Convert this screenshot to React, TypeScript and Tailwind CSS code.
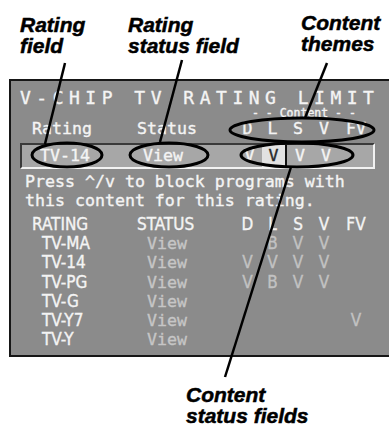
const mono = "font-['DejaVu_Sans_Mono',monospace]";
const sans = "font-['DejaVu_Sans_Condensed','Liberation_Sans_Narrow','DejaVu_Sans',sans-serif]";
const label = "font-['Liberation_Sans',Arial,sans-serif] text-[21px] leading-[21px] font-bold italic text-black [-webkit-text-stroke:0.5px_#000]";

type Row = { rating: string; cells: string[] };

const rows: Row[] = [
  { rating: "TV-MA", cells: ["", "B", "V", "V", ""] },
  { rating: "TV-14", cells: ["V", "V", "V", "V", ""] },
  { rating: "TV-PG", cells: ["V", "B", "V", "V", ""] },
  { rating: "TV-G", cells: ["", "", "", "", ""] },
  { rating: "TV-Y7", cells: ["", "", "", "", "V"] },
  { rating: "TV-Y", cells: ["", "", "", "", ""] },
];

const themes = ["D", "L", "S", "V", "FV"];
const cols = "grid grid-cols-[110px_105px_25px_25px_26px_26px_38px]";

function Callouts() {
  return (
    <svg className="pointer-events-none absolute inset-0" width={389} height={426} viewBox="0 0 389 426" fill="none" stroke="#000">
      <line x1={65} y1={63} x2={45} y2={144} strokeWidth={2.5} />
      <line x1={182} y1={60} x2={160} y2={142} strokeWidth={2.5} />
      <line x1={327} y1={63} x2={305} y2={118} strokeWidth={2.5} />
      <line x1={291} y1={167} x2={225} y2={377} strokeWidth={2.5} />
      <ellipse cx={67} cy={155} rx={35} ry={12} strokeWidth={3} />
      <ellipse cx={169} cy={155} rx={39} ry={12} strokeWidth={3} />
      <ellipse cx={302} cy={130} rx={72} ry={12} strokeWidth={3} />
      <ellipse cx={297} cy={155} rx={56} ry={12} strokeWidth={3} />
    </svg>
  );
}

export default function App() {
  return (
    <div className="relative h-[426px] w-[389px] overflow-hidden bg-white">
      {/* top callout labels */}
      <div className="flex h-[79px] pl-[20px] pt-[14px]">
        <div className={`w-[108px] ${label}`}>
          Rating
          <br />
          field
        </div>
        <div className={`w-[173px] ${label}`}>
          Rating
          <br />
          status field
        </div>
        <div className={`${label} -mt-[2px]`}>
          Content
          <br />
          themes
        </div>
      </div>

      {/* on-screen menu */}
      <div className="ml-[9px] h-[278px] border-y-2 border-l-2 border-[#161616] bg-[#8b8b8b] text-[#f4f4f4] [-webkit-text-stroke:0.35px_currentColor]">
        <div className={`pl-[9px] pt-[7px] text-[18px] leading-[20px] tracking-[5.5px] ${mono}`}>
          V-CHIP TV RATING LIMIT
        </div>

        <div className={`${cols} pl-[9px] text-[11.5px] leading-[10px] ${mono}`}>
          <div className="col-span-2" />
          <div className="col-span-5 pl-[17px] whitespace-pre">- - Content - -</div>
        </div>

        <div className={`${cols} pl-[9px] pt-[1px] text-[16.6px] leading-[20px] ${mono}`}>
          <div className="pl-[12px]">Rating</div>
          <div className="pl-[7px]">Status</div>
          {themes.map((t) => (
            <div key={t} className="text-center">
              {t}
            </div>
          ))}
        </div>

        {/* selected rating row */}
        <div className="mt-[4px] pl-[9px]">
          <div className={`${cols} h-[26px] w-[355px] border-2 border-t-[#3a3a3a] border-l-[#3a3a3a] border-b-[#f2f2f2] border-r-[#f2f2f2] bg-[#a7a7a7] text-[16.6px] leading-[22px] ${mono}`}>
            <div className="pl-[18px]">TV-14</div>
            <div className="pl-[11px]">View</div>
            <div className="text-center">V</div>
            <div className="border-r-2 border-[#111] bg-[#e2e2e2] text-center text-[#2a2a2a]">V</div>
            <div className="text-center">V</div>
            <div className="text-center">V</div>
            <div />
          </div>
        </div>

        <div className={`mt-[3px] pl-[14px] text-[16.6px] leading-[19px] ${mono}`}>
          <div className="whitespace-pre">Press ^/v to block programs with</div>
          <div>this content for this rating.</div>
        </div>

        {/* rating table */}
        <div className={`mt-[5px] pl-[9px] text-[17px] leading-[19.2px] ${sans}`}>
          <div className={cols}>
            <div className="pl-[12px]">RATING</div>
            <div className="pl-[7px]">STATUS</div>
            {themes.map((t) => (
              <div key={t} className="text-center">
                {t}
              </div>
            ))}
          </div>
          {rows.map((r) => (
            <div key={r.rating} className={cols}>
              <div className="pl-[22px]">{r.rating}</div>
              <div className={`pl-[17px] text-[16.6px] text-[#c6c6c6] ${mono}`}>View</div>
              {r.cells.map((c, i) => (
                <div key={i} className="text-center text-[#c2c2c2]">
                  {c}
                </div>
              ))}
            </div>
          ))}
        </div>
      </div>

      {/* bottom callout label */}
      <div className={`mt-[27px] pl-[186px] ${label}`}>
        Content
        <br />
        status fields
      </div>

      <Callouts />
    </div>
  );
}
